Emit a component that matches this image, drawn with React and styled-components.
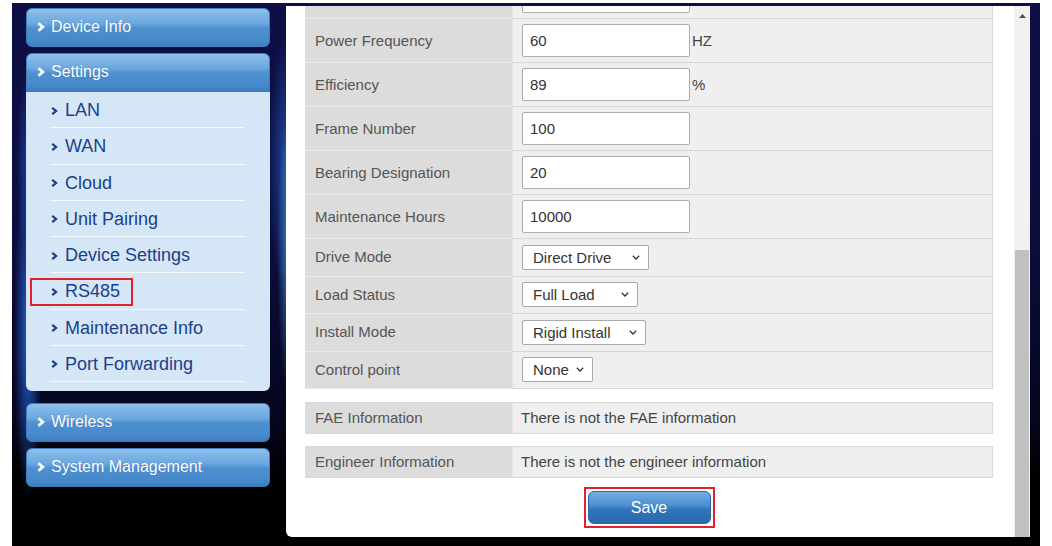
import styled, { createGlobalStyle } from "styled-components";

const GlobalStyle = createGlobalStyle`
  *, *::before, *::after { box-sizing: border-box; }
  html, body { margin: 0; padding: 0; background: #fff; }
  body {
    font-family: "Liberation Sans", Arial, sans-serif;
    overflow: hidden;
  }
`;

const topMenus = ["Device Info", "Settings"];
const bottomMenus = ["Wireless", "System Management"];
const subMenus = [
  "LAN",
  "WAN",
  "Cloud",
  "Unit Pairing",
  "Device Settings",
  "RS485",
  "Maintenance Info",
  "Port Forwarding",
];

// the first row sits mostly above the scrolled view
const inputRows = [
  { label: "", value: "1480" },
  { label: "Power Frequency", value: "60", unit: "HZ" },
  { label: "Efficiency", value: "89", unit: "%" },
  { label: "Frame Number", value: "100" },
  { label: "Bearing Designation", value: "20" },
  { label: "Maintenance Hours", value: "10000" },
];

const selectRows = [
  { label: "Drive Mode", value: "Direct Drive", width: 127 },
  { label: "Load Status", value: "Full Load", width: 116 },
  { label: "Install Mode", value: "Rigid Install", width: 124 },
  { label: "Control point", value: "None", width: 71 },
];

const infoRows = [
  { label: "FAE Information", text: "There is not the FAE information" },
  { label: "Engineer Information", text: "There is not the engineer information" },
];

const Chevron = ({ color, w = 8, h = 10, sw = 2.8 }) => (
  <svg width={w} height={h} viewBox="0 0 8 10">
    <polyline
      points="1.4,1.3 5.8,5 1.4,8.7"
      fill="none"
      stroke={color}
      strokeWidth={sw}
      strokeLinejoin="miter"
    />
  </svg>
);

const App = () => {
  return (
    <Page>
      <GlobalStyle />
      <Frame>
        <Sidebar>
          {topMenus.map((m) => (
            <MenuHeader key={m} $open={m === "Settings"}>
              <Chevron color="#fff" />
              {m}
            </MenuHeader>
          ))}
          <SubPanel>
            {subMenus.map((s) => (
              <SubItem key={s}>
                <SubLink $marked={s === "RS485"}>
                  <Chevron color="#1c3f8c" w={7} h={10} sw={2.6} />
                  {s}
                </SubLink>
              </SubItem>
            ))}
          </SubPanel>
          {bottomMenus.map((m) => (
            <MenuHeader key={m} $spaced={m === "Wireless"}>
              <Chevron color="#fff" />
              {m}
            </MenuHeader>
          ))}
        </Sidebar>

        <Panel>
          <Content>
            <Table>
              {inputRows.map((r, i) => (
                <Row key={i} $h={44}>
                  <Label>{r.label}</Label>
                  <Value>
                    <TextInput defaultValue={r.value} />
                    {r.unit && <Unit>{r.unit}</Unit>}
                  </Value>
                </Row>
              ))}
              {selectRows.map((r) => (
                <Row key={r.label} $h={37.5}>
                  <Label>{r.label}</Label>
                  <Value>
                    <SelectWrap>
                      <Select $w={r.width} defaultValue={r.value}>
                        <option>{r.value}</option>
                      </Select>
                      <Caret width="8" height="5" viewBox="0 0 8 5">
                        <polyline
                          points="0.8,0.8 4,4 7.2,0.8"
                          fill="none"
                          stroke="#333"
                          strokeWidth="1.3"
                        />
                      </Caret>
                    </SelectWrap>
                  </Value>
                </Row>
              ))}
            </Table>

            {infoRows.map((r) => (
              <InfoBox key={r.label}>
                <Label>{r.label}</Label>
                <Value $text>{r.text}</Value>
              </InfoBox>
            ))}

            <SaveRow>
              <SaveFrame>
                <SaveButton>Save</SaveButton>
              </SaveFrame>
            </SaveRow>
          </Content>

          <ScrollBar>
            <ScrollArrow>
              <svg width="7" height="4" viewBox="0 0 7 4">
                <polygon points="0,4 3.5,0 7,4" fill="#505050" />
              </svg>
            </ScrollArrow>
            <ScrollThumb />
          </ScrollBar>
        </Panel>
      </Frame>
    </Page>
  );
};

const Page = styled.div`
  padding: 3px 12px 0 12px;
  height: 546px;
`;

const Frame = styled.div`
  height: 543px;
  display: flex;
  align-items: flex-start;
  gap: 16px;
  padding-left: 14px;
  background:
    radial-gradient(ellipse 14px 150px at 279px 250px, rgba(70, 170, 240, 0.75), transparent),
    radial-gradient(ellipse 18px 130px at 274px 160px, rgba(40, 110, 220, 0.6), transparent),
    radial-gradient(ellipse 14px 170px at 16px 330px, rgba(40, 110, 235, 0.85), transparent),
    radial-gradient(ellipse 10px 90px at 14px 160px, rgba(30, 80, 200, 0.6), transparent),
    linear-gradient(#0e0f45 0%, #0c0c3c 45%, #060620 75%, #000 88%);
`;

const Sidebar = styled.div`
  width: 244px;
  padding-top: 5px;
  display: flex;
  flex-direction: column;
  gap: 6px;
`;

const MenuHeader = styled.div`
  height: 39px;
  display: flex;
  align-items: center;
  gap: 6px;
  padding: 0 0 2px 10px;
  margin-top: ${(p) => (p.$spaced ? "6px" : "0")};
  margin-bottom: ${(p) => (p.$open ? "-6px" : "0")};
  color: #fff;
  font-size: 16px;
  text-shadow: 0 0 1px rgba(20, 60, 120, 0.4);
  border-radius: ${(p) => (p.$open ? "6px 6px 0 0" : "6px")};
  border: 1px solid #3f7dbd;
  background: linear-gradient(
    #8ec0ea 0%,
    #6aa6de 40%,
    #4e8fd0 52%,
    #468acb 85%,
    #3c7fc1 100%
  );
`;

const SubPanel = styled.div`
  background: #d5e7f6;
  border-radius: 0 0 6px 6px;
  padding-bottom: 9px;
`;

const SubItem = styled.div`
  position: relative;
  height: 36.25px;
  display: flex;
  align-items: center;
  padding-left: 4px;

  &::after {
    content: "";
    position: absolute;
    left: 24px;
    right: 25px;
    bottom: 0;
    height: 1px;
    background: rgba(255, 255, 255, 0.75);
  }
`;

const SubLink = styled.span`
  height: 28px;
  display: inline-flex;
  align-items: center;
  gap: 7px;
  padding: 0 11px 0 19px;
  border: 2px solid ${(p) => (p.$marked ? "#e3202b" : "transparent")};
  color: #1c3f8c;
  font-size: 18px;
  margin-top: 1px;
`;

const Panel = styled.div`
  width: 744px;
  height: 531px;
  margin-top: 3px;
  display: flex;
  background: #fff;
  border-radius: 0 0 0 6px;
  overflow: hidden;
`;

const Content = styled.div`
  flex: 1;
  height: 100%;
  overflow: hidden;
  display: flex;
  flex-direction: column;
  justify-content: flex-end;
  padding: 0 21px 9px 19px;
`;

const Table = styled.div`
  flex-shrink: 0;
  border-right: 1px solid #d9d9d9;
  margin-bottom: 13px;
`;

const Row = styled.div`
  display: grid;
  grid-template-columns: 207px 1fr;
  height: ${(p) => p.$h}px;
`;

const Label = styled.div`
  display: flex;
  align-items: center;
  padding: 0 0 1px 10px;
  background: #dcdcdc;
  color: #555;
  font-size: 15px;
  border-bottom: 1px solid #e8e8e8;
`;

const Value = styled.div`
  display: flex;
  align-items: center;
  padding-left: ${(p) => (p.$text ? "8px" : "9px")};
  padding-bottom: ${(p) => (p.$text ? "1px" : "0")};
  background: #efefef;
  color: #444;
  font-size: 15px;
  border-bottom: 1px solid #d6d6d6;
  border-left: 1px solid #e4e4e4;
`;

const TextInput = styled.input`
  width: 168px;
  height: 33px;
  border: 1px solid #adadad;
  border-radius: 2px;
  background: #fff;
  padding: 0 7px;
  font-family: "Liberation Sans", Arial, sans-serif;
  font-size: 15px;
  color: #333;
  outline: none;
`;

const Unit = styled.span`
  margin-left: 2px;
  color: #444;
  font-size: 15px;
`;

const SelectWrap = styled.span`
  position: relative;
  display: inline-flex;
`;

const Select = styled.select`
  appearance: none;
  width: ${(p) => p.$w}px;
  height: 25px;
  border: 1px solid #a9a9a9;
  border-radius: 2px;
  background: #fff;
  padding: 0 0 0 10px;
  font-family: "Liberation Sans", Arial, sans-serif;
  font-size: 15px;
  color: #333;
  outline: none;
`;

const Caret = styled.svg`
  position: absolute;
  right: 9px;
  top: 10px;
  pointer-events: none;
`;

const InfoBox = styled.div`
  flex-shrink: 0;
  display: grid;
  grid-template-columns: 207px 1fr;
  height: 32px;
  margin-bottom: 12px;
  border: 1px solid #d9d9d9;
  border-left: none;

  & > div {
    border-bottom: none;
  }
`;

const SaveRow = styled.div`
  flex-shrink: 0;
  display: flex;
  justify-content: center;
  margin-top: -3px;
`;

const SaveFrame = styled.div`
  border: 2px solid #e3202b;
  padding: 2px;
  display: flex;
`;

const SaveButton = styled.button`
  width: 123px;
  height: 33px;
  border: 1px solid #2b64a6;
  border-radius: 6px;
  background: linear-gradient(#74afe2 0%, #4a8ccd 45%, #3275bb 55%, #2a69ad 100%);
  color: #fff;
  font-family: "Liberation Sans", Arial, sans-serif;
  font-size: 16px;
  cursor: pointer;
`;

const ScrollBar = styled.div`
  width: 16px;
  height: 100%;
  background: #f1f1f1;
  display: flex;
  flex-direction: column;
  justify-content: space-between;
`;

const ScrollArrow = styled.div`
  height: 17px;
  display: flex;
  align-items: center;
  justify-content: center;
  padding-top: 2px;
`;

const ScrollThumb = styled.div`
  height: 287px;
  margin: 0 1px;
  background: #c1c1c1;
`;

export default App;
